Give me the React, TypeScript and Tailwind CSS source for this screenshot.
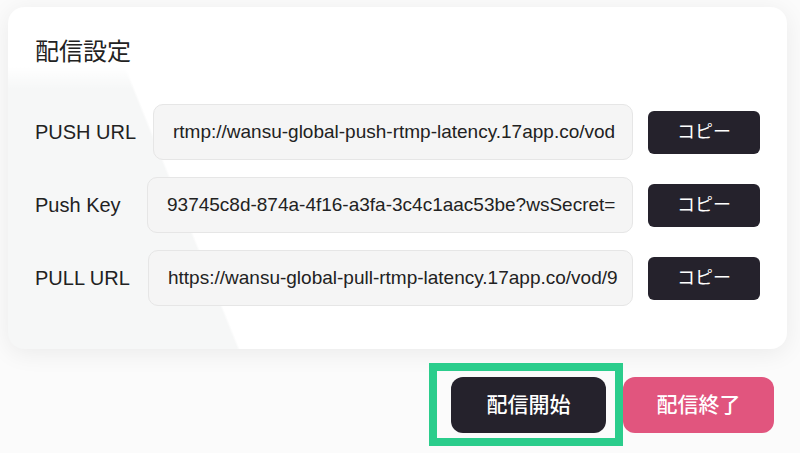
import React from 'react';

const rows = [
  { label: 'PUSH URL', labelW: 'w-[118px]', value: 'rtmp://wansu-global-push-rtmp-latency.17app.co/vod' },
  { label: 'Push Key', labelW: 'w-[112px]', value: '93745c8d-874a-4f16-a3fa-3c4c1aac53be?wsSecret=' },
  { label: 'PULL URL', labelW: 'w-[113px]', value: 'https://wansu-global-pull-rtmp-latency.17app.co/vod/9' },
];

export default function App() {
  return (
    <div
      className="w-[800px] h-[453px] overflow-hidden bg-[#fbfbfb] text-[#222222]"
      style={{ fontFamily: '"Liberation Sans", Arial, "Noto Sans CJK JP", sans-serif' }}
    >
      <div className="pt-[7px] pl-[8px] pr-[13px]">
        <div className="rounded-[16px] bg-white bg-[linear-gradient(180deg,#ffffff_0,#ffffff_60px,rgba(255,255,255,0)_82px),linear-gradient(68deg,#f6f7f7_0,#f6f7f7_25%,#ffffff_25.3%)] shadow-[0_4px_24px_rgba(0,0,0,0.07)] pt-[29px] px-[27px] pb-[43px]">
          <h1 className="text-[24px] leading-[32px] font-normal mb-[36px]">配信設定</h1>
          <div className="flex flex-col gap-[17px]">
            {rows.map((r) => (
              <div key={r.label} className="flex items-center">
                <div className={`${r.labelW} shrink-0 text-[20px] leading-[24px]`}>{r.label}</div>
                <div className="flex-1 min-w-0 h-[56px] rounded-[10px] border border-[#e6e6e6] bg-[#f5f5f5] pl-[19px] pr-[2px] flex items-center overflow-hidden">
                  <span className="block flex-1 min-w-0 overflow-hidden whitespace-nowrap text-[19px] text-[#222222]">
                    {r.value}
                  </span>
                </div>
                <button className="ml-[15px] w-[112px] h-[43px] shrink-0 rounded-[6px] bg-[#25222c] text-white text-[18px]">
                  コピー
                </button>
              </div>
            ))}
          </div>
        </div>
      </div>
      <div className="flex justify-end gap-[17px] pr-[26px] mt-[28px]">
        <div className="relative">
          <button className="w-[155px] h-[56px] rounded-[12px] bg-[#25222c] text-white text-[21px] font-medium">
            配信開始
          </button>
          <div className="absolute left-[-22px] top-[-14px] w-[194px] h-[83px] border-[8px] border-[#2bcd8c] pointer-events-none" />
        </div>
        <button className="w-[151px] h-[56px] rounded-[12px] bg-[#e1557e] text-white text-[21px] font-medium">
          配信終了
        </button>
      </div>
    </div>
  );
}
